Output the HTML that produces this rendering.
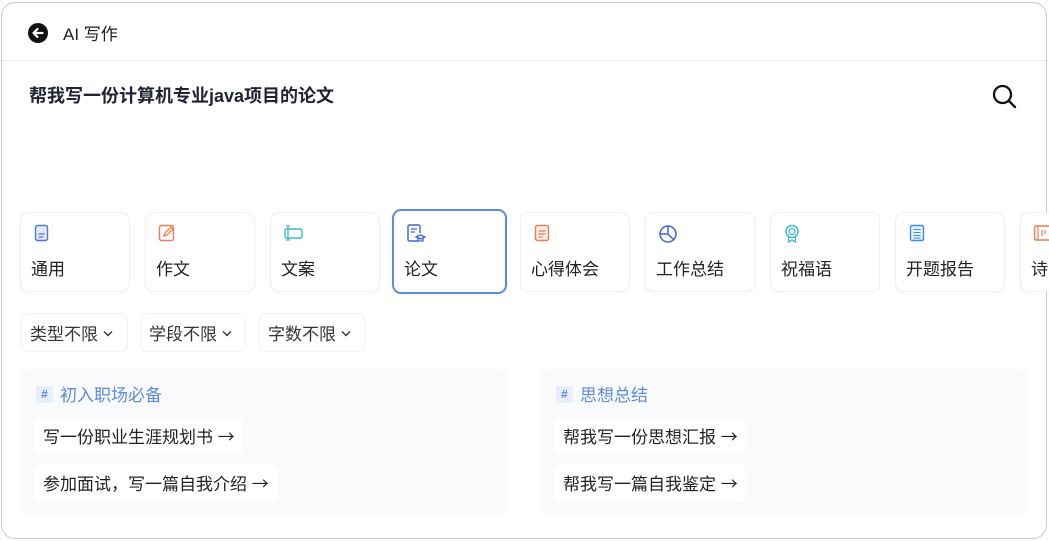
<!DOCTYPE html>
<html><head><meta charset="utf-8"><style>
*{box-sizing:border-box;margin:0;padding:0}
body{width:1049px;height:541px;overflow:hidden;background:#fff;font-family:"Liberation Sans","Noto Sans CJK SC",sans-serif;color:#222;position:relative}
.frame{position:absolute;left:1px;top:2px;width:1046px;height:537px;border:1px solid #c9c8d8;border-radius:14px;background:#fff;overflow:hidden}
.abs{position:absolute}
.card{position:absolute;top:212px;width:110px;height:80px;border:1px solid #f0f0f3;border-radius:9px;background:#fff;box-shadow:0 1px 3px rgba(0,0,0,.04)}
.card .t{position:absolute;left:10px;top:42px;font-size:17px;color:#222}
.card svg{position:absolute;left:12px;top:11px}
.sel{top:209px;height:85px;width:115px;border:2px solid #5b8be0}
.sel .t{top:44px}
.sel svg{top:13px}
.flt{position:absolute;top:313px;height:39px;border:1px solid #f0f0f3;border-radius:8px;font-size:17px;color:#333;padding:6px 0 0 8px}
.flt svg{margin-left:5px;vertical-align:3px}
.panel{position:absolute;top:369px;width:488px;height:146px;background:#fafafc;border-radius:8px}
.tag{position:absolute;left:16px;top:17px;width:17px;height:17px;background:#e8eefa;color:#5b8be0;font-size:12px;font-weight:bold;text-align:center;line-height:17px}
.ttl{position:absolute;left:40px;top:12px;font-size:17px;color:#5b8be0}
.pill{position:absolute;left:15px;height:38px;background:#fff;border-radius:8px;font-size:17px;color:#222;padding:6px 8px 0 8px;white-space:nowrap}
.ar{font-family:"Noto Sans CJK SC",sans-serif}
</style></head><body>
<div class="frame">
<svg class="abs" style="left:25px;top:19px" width="22" height="22" viewBox="0 0 22 22"><circle cx="11" cy="11" r="10" fill="#111"/><path d="M15.5 11H7M10.5 7L6.5 11L10.5 15" stroke="#fff" stroke-width="2.2" fill="none" stroke-linecap="round" stroke-linejoin="round"/></svg>
<div class="abs" style="left:61px;top:17px;font-size:17px;color:#222">AI 写作</div>
<div class="abs" style="left:0;top:57px;width:100%;height:1px;background:#eeeef2"></div>
<div class="abs" style="left:27px;top:79px;font-size:18px;font-weight:bold;color:#1e2433">帮我写一份计算机专业java项目的论文</div>
<svg class="abs" style="left:989px;top:80px" width="28" height="28" viewBox="0 0 28 28"><circle cx="11.5" cy="11.5" r="8.5" stroke="#111" stroke-width="2.3" fill="none"/><path d="M17.8 17.8L24 24" stroke="#111" stroke-width="2.4" stroke-linecap="round"/></svg>
</div>
<div class="card" style="left:20px"><svg width="18" height="18" viewBox="0 0 18 18"><rect x="2.5" y="1.5" width="12" height="15" rx="2" fill="#e3e8fb" stroke="#4f78e0" stroke-width="1.4"/><path d="M5.5 10h6M5.5 13h5" stroke="#4f78e0" stroke-width="1.3"/></svg><div class="t">通用</div></div>
<div class="card" style="left:145px"><svg width="18" height="18" viewBox="0 0 18 18"><rect x="1.5" y="1.5" width="14" height="15" rx="2" fill="none" stroke="#f07a55" stroke-width="1.4"/><path d="M6 12l1-3 6-6 2 2-6 6z" fill="none" stroke="#f07a55" stroke-width="1.3"/></svg><div class="t">作文</div></div>
<div class="card" style="left:270px"><svg width="22" height="18" viewBox="0 0 22 18"><rect x="2" y="5" width="17" height="9" rx="1.5" fill="none" stroke="#3bbfc9" stroke-width="1.4"/><path d="M5 2v14M3 2h4M3 16h4" stroke="#3bbfc9" stroke-width="1.3"/></svg><div class="t">文案</div></div>
<div class="card sel" style="left:392px"><svg width="20" height="20" viewBox="0 0 20 20"><path d="M12 17H3.5a1.5 1.5 0 0 1-1.5-1.5v-13A1.5 1.5 0 0 1 3.5 1h9A1.5 1.5 0 0 1 14 2.5V9" fill="none" stroke="#3d66d6" stroke-width="1.4"/><path d="M5 5h6M5 8h4" stroke="#3d66d6" stroke-width="1.3"/><path d="M10 13l4.5-2 4.5 2-4.5 2z M12 14v3h5v-3" fill="none" stroke="#3d66d6" stroke-width="1.3"/></svg><div class="t">论文</div></div>
<div class="card" style="left:520px"><svg width="18" height="18" viewBox="0 0 18 18"><rect x="2.5" y="1.5" width="13" height="15" rx="2" fill="#fdeee8" stroke="#f07a55" stroke-width="1.4"/><path d="M5.5 7h7M5.5 10h7M5.5 13h4" stroke="#f07a55" stroke-width="1.2"/></svg><div class="t">心得体会</div></div>
<div class="card" style="left:645px"><svg width="20" height="20" viewBox="0 0 20 20"><circle cx="10" cy="10" r="8" fill="none" stroke="#3d66d6" stroke-width="1.5"/><path d="M10 2v8H2M10 10l5.5 5.5" stroke="#3d66d6" stroke-width="1.5" fill="none"/></svg><div class="t">工作总结</div></div>
<div class="card" style="left:770px"><svg width="18" height="20" viewBox="0 0 18 20"><circle cx="9" cy="7.5" r="6" fill="none" stroke="#3bbfc9" stroke-width="1.5"/><circle cx="9" cy="7.5" r="3" fill="none" stroke="#3bbfc9" stroke-width="1.3"/><path d="M5.5 12.5V18l3.5-2 3.5 2v-5.5" fill="none" stroke="#3bbfc9" stroke-width="1.3"/></svg><div class="t">祝福语</div></div>
<div class="card" style="left:895px"><svg width="18" height="18" viewBox="0 0 18 18"><rect x="2.5" y="1.5" width="13" height="15" rx="1.5" fill="#e6f2fd" stroke="#3d8fe6" stroke-width="1.4"/><path d="M5.5 5.5h7M5.5 8.5h7M5.5 11.5h7M5.5 14h7" stroke="#3d8fe6" stroke-width="1.1"/></svg><div class="t">开题报告</div></div>
<div class="card" style="left:1020px"><svg width="18" height="18" viewBox="0 0 18 18"><rect x="1.5" y="2" width="16" height="14" rx="1.5" fill="none" stroke="#f07a55" stroke-width="1.4"/><path d="M5 2v14M9 6v6M12 6v4" stroke="#f07a55" stroke-width="1.2"/></svg><div class="t">诗</div></div>
<div class="flt" style="left:21px;width:107px">类型不限<svg width="10" height="7" viewBox="0 0 10 7"><path d="M1 1.5l4 4 4-4" stroke="#333" stroke-width="1.4" fill="none"/></svg></div>
<div class="flt" style="left:140px;width:106px">学段不限<svg width="10" height="7" viewBox="0 0 10 7"><path d="M1 1.5l4 4 4-4" stroke="#333" stroke-width="1.4" fill="none"/></svg></div>
<div class="flt" style="left:259px;width:106px">字数不限<svg width="10" height="7" viewBox="0 0 10 7"><path d="M1 1.5l4 4 4-4" stroke="#333" stroke-width="1.4" fill="none"/></svg></div>
<div class="panel" style="left:20px"><div class="tag">#</div><div class="ttl">初入职场必备</div>
<div class="pill" style="top:48px">写一份职业生涯规划书 <span class="ar">→</span></div>
<div class="pill" style="top:95px">参加面试，写一篇自我介绍 <span class="ar">→</span></div></div>
<div class="panel" style="left:540px"><div class="tag">#</div><div class="ttl">思想总结</div>
<div class="pill" style="top:48px">帮我写一份思想汇报 <span class="ar">→</span></div>
<div class="pill" style="top:95px">帮我写一篇自我鉴定 <span class="ar">→</span></div></div>
</body></html>
